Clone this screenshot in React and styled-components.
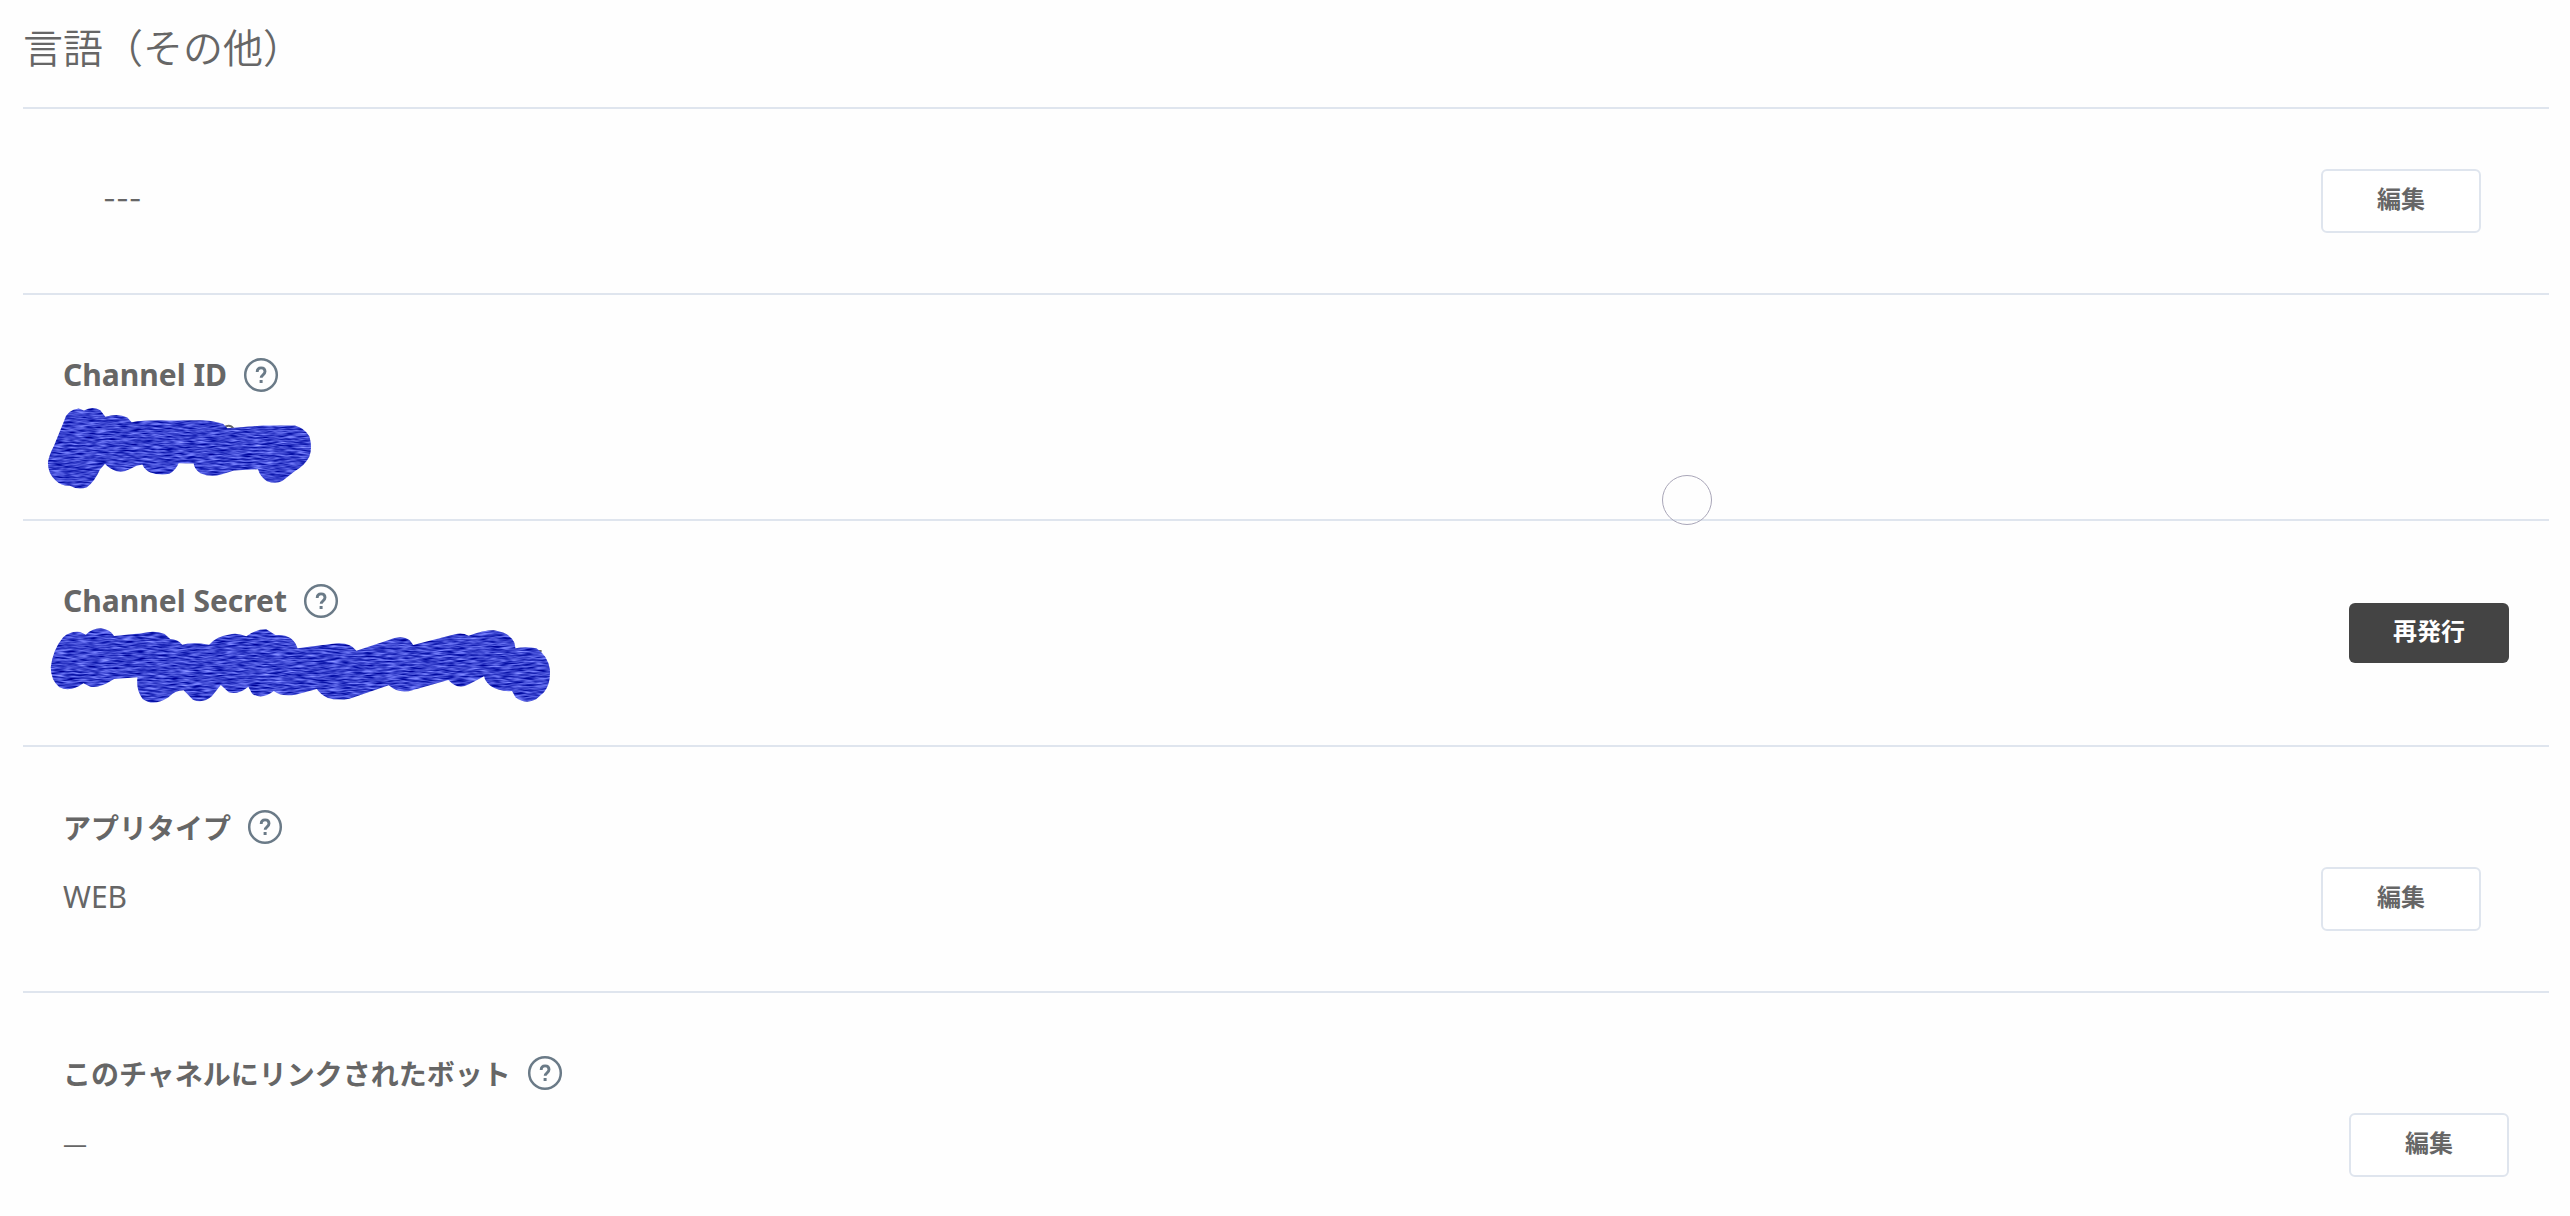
import React from "react";
import styled, { createGlobalStyle } from "styled-components";

const GlobalStyle = createGlobalStyle`
  * { box-sizing: border-box; }
  body {
    margin: 0;
    background: #fefefe;
    color: #666;
    font-family: "Noto Sans", "Noto Sans CJK JP", sans-serif;
  }
`;

const Page = styled.main`
  position: relative;
  padding: 0 21px 0 23px;
`;

const Title = styled.h1`
  margin: 0;
  padding: 16px 0 31px;
  font-family: "Noto Sans CJK JP", sans-serif;
  font-size: 40px;
  line-height: 60px;
  font-weight: 350;
`;

const Row = styled.section`
  display: flex;
  justify-content: space-between;
  align-items: ${(p) => p.$align || "center"};
  padding: 60px ${(p) => (p.$inset ? 68 : 40)}px 60px ${(p) => (p.$indent ? 80 : 40)}px;
  border-top: 2px solid #dfe5ee;
`;

const Info = styled.div`
  display: flex;
  flex-direction: column;
  gap: ${(p) => (p.$spaced ? 20 : 0)}px;
`;

const Label = styled.h2`
  display: flex;
  align-items: center;
  gap: 16px;
  margin: 0;
  font-family: ${(p) => (p.$latin ? '"Noto Sans", sans-serif' : '"Noto Sans CJK JP", sans-serif')};
  font-size: ${(p) => (p.$latin ? 30 : 28)}px;
  line-height: 40px;
  font-weight: 700;
`;

const HelpButton = styled.button`
  display: flex;
  padding: 0;
  border: 0;
  background: none;
  color: #6a7a87;
  cursor: pointer;
`;

const Value = styled.div`
  position: relative;
  height: 64px;
  font-size: ${(p) => (p.$small ? 24 : 30)}px;
  line-height: 60px;
  font-weight: 400;
`;

const Dashes = styled.div`
  font-family: Inter, sans-serif;
  font-size: 28px;
  line-height: 60px;
  height: 64px;
`;

const Button = styled.button`
  width: 160px;
  height: ${(p) => (p.$dark ? 60 : 64)}px;
  padding: 0 0 6px;
  border: ${(p) => (p.$dark ? "0" : "2px solid #dfe5ee")};
  border-radius: 6px;
  background: ${(p) => (p.$dark ? "#444" : "#fff")};
  color: ${(p) => (p.$dark ? "#fff" : "#666")};
  font-family: "Noto Sans CJK JP", sans-serif;
  font-size: 24px;
  line-height: 36px;
  font-weight: 700;
  cursor: pointer;
`;

const Scribble = styled.svg`
  position: absolute;
  left: ${(p) => p.$left}px;
  top: ${(p) => p.$top}px;
  display: block;
`;

const Cursor = styled.span`
  position: absolute;
  left: 1662px;
  top: 475px;
  width: 50px;
  height: 50px;
  border: 1px solid #a9a6b8;
  border-radius: 50%;
`;

function Help({ topic }) {
  return (
    <HelpButton type="button" aria-label={topic}>
      <svg width="36" height="36" viewBox="0 0 36 36" fill="none" stroke="currentColor">
        <circle cx="18" cy="18" r="15.8" strokeWidth="2.5" />
        <path d="M14.2 15c0-2.7 1.5-4.1 3.9-4.1s3.9 1.5 3.9 3.7c0 3.2-3.8 3.2-3.8 6.2" strokeWidth="2.9" />
        <path d="M16.6 23h3v3h-3z" fill="currentColor" stroke="none" />
      </svg>
    </HelpButton>
  );
}

function PaintFilter({ id, frequency }) {
  return (
    <filter id={id} x="0" y="0" width="100%" height="100%" colorInterpolationFilters="sRGB">
      <feTurbulence type="fractalNoise" baseFrequency={frequency} numOctaves="2" seed="7" result="noise" />
      <feColorMatrix
        in="noise"
        type="matrix"
        values="0.9 0 0 0 -0.22  0.9 0 0 0 -0.18  0.7 0 0 0 0.46  0 0 0 0 1"
      />
      <feComposite in2="SourceGraphic" operator="in" />
    </filter>
  );
}

function IdScribble() {
  return (
    <Scribble $left={-18} $top={10} width="270" height="87" viewBox="45 195 810 260" aria-hidden="true">
      <PaintFilter id="paint-id" frequency="0.03 0.2" />
      <path d="M580 262Q600 250 610 265" fill="none" stroke="#666" strokeWidth="6" />
      <path
        filter="url(#paint-id)"
        fill="#3a43cf"
        d="M103 240Q112 209 146 205L162 211Q186 196 211 210L226 230Q264 218 292 232L305 246Q350 238 420 241L520 240Q558 243 579 251L592 264L700 256L795 256Q824 264 838 288Q848 320 838 350Q824 377 793 394L758 422Q737 433 711 423Q690 409 684 387L612 391L576 402Q542 413 511 399Q493 387 491 370L446 369Q438 389 418 401Q386 406 361 397Q343 388 337 373Q316 376 303 385Q281 398 260 393Q237 386 225 371L210 388Q194 424 171 441Q146 451 119 437Q94 438 77 421Q52 398 54 365Q58 343 72 317Z"
      />
    </Scribble>
  );
}

function SecretScribble() {
  return (
    <Scribble $left={-15} $top={5} width="506" height="80" viewBox="50 170 1470 240" preserveAspectRatio="none" aria-hidden="true">
      <PaintFilter id="paint-secret" frequency="0.03 0.2" />
      <path d="M1455 245H1484" stroke="#666" strokeWidth="6" />
      <path
        filter="url(#paint-secret)"
        fill="#3a43cf"
        d="M94 204Q115 184 144 188L160 196Q176 178 204 177Q231 181 242 200L322 192Q360 181 389 194L405 209Q427 210 440 226Q470 218 518 226Q541 200 574 196Q600 188 626 201Q652 180 684 180L711 197Q762 193 775 237L872 224Q926 214 946 244L1038 213Q1077 194 1101 213L1111 227L1232 195Q1253 188 1272 199Q1319 182 1345 183Q1391 189 1405 220L1408 237Q1438 230 1469 237Q1502 259 1508 300Q1511 342 1491 369L1468 390Q1437 407 1408 384L1398 365Q1362 368 1336 350Q1319 336 1317 321L1273 345Q1240 363 1213 332L1111 362Q1071 376 1040 348L926 388Q889 394 863 386Q840 374 831 359L769 376Q725 382 706 365Q672 393 643 373L632 352Q603 377 575 369L552 347L526 381Q500 404 471 391L444 363Q419 363 400 384Q357 413 325 389Q305 362 310 324L242 329Q197 359 173 352L153 342Q115 370 83 354Q58 333 58 294Q64 241 94 204Z"
      />
    </Scribble>
  );
}

export default function App() {
  return (
    <>
      <GlobalStyle />
      <Page>
        <Title>言語（その他）</Title>

        <Row $indent $inset>
          <Dashes>---</Dashes>
          <Button type="button">編集</Button>
        </Row>

        <Row>
          <Info>
            <Label $latin>Channel ID <Help topic="Channel ID" /></Label>
            <Value><IdScribble /></Value>
          </Info>
        </Row>

        <Row>
          <Info>
            <Label $latin>Channel Secret <Help topic="Channel Secret" /></Label>
            <Value><SecretScribble /></Value>
          </Info>
          <Button type="button" $dark>再発行</Button>
        </Row>

        <Row $inset $align="flex-end">
          <Info $spaced>
            <Label>アプリタイプ <Help topic="アプリタイプ" /></Label>
            <Value>WEB</Value>
          </Info>
          <Button type="button">編集</Button>
        </Row>

        <Row $align="flex-end">
          <Info $spaced>
            <Label>このチャネルにリンクされたボット <Help topic="このチャネルにリンクされたボット" /></Label>
            <Value $small>—</Value>
          </Info>
          <Button type="button">編集</Button>
        </Row>

        <Cursor />
      </Page>
    </>
  );
}
